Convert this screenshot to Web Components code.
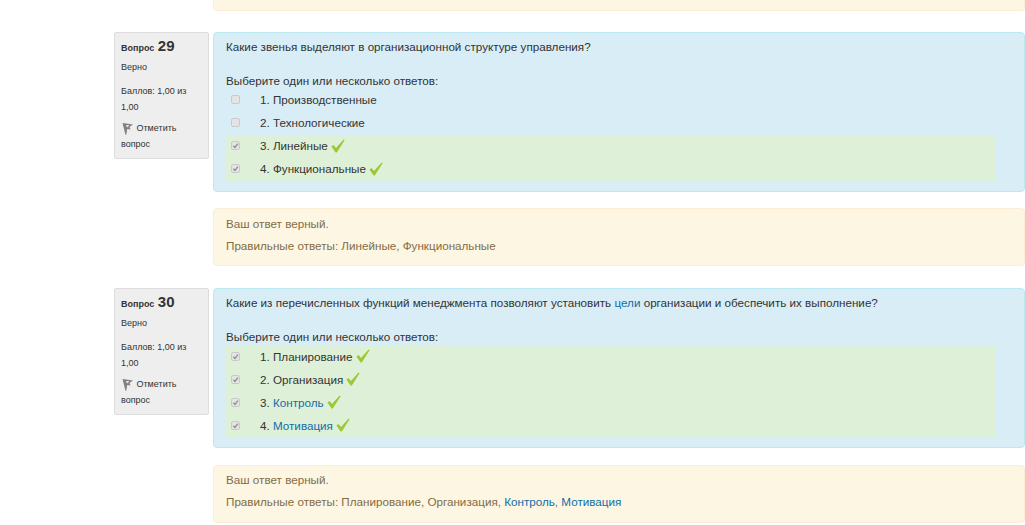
<!DOCTYPE html>
<html lang="ru">
<head>
<meta charset="utf-8">
<title>Тест</title>
<style>
  html, body { margin: 0; padding: 0; background: #fff; overflow: hidden; }
  body { font-family: "Liberation Sans", Arial, sans-serif; font-size: 11.66px; color: #333; height: 525px; }
  a { color: #0e6fa8; text-decoration: none; }
</style>
</head>
<body>
<quiz-page>
  <quiz-feedback slot="top" class="stub"></quiz-feedback>

  <quiz-question number="29" text="Какие звенья выделяют в организационной структуре управления?">
    <quiz-option label="1. Производственные"></quiz-option>
    <quiz-option label="2. Технологические"></quiz-option>
    <quiz-option label="3. Линейные" correct></quiz-option>
    <quiz-option label="4. Функциональные" correct></quiz-option>
    <span slot="feedback">Правильные ответы: Линейные, Функциональные</span>
  </quiz-question>

  <quiz-question number="30">
    <span slot="text">Какие из перечисленных функций менеджмента позволяют установить <a>цели</a> организации и обеспечить их выполнение?</span>
    <quiz-option label="1. Планирование" correct></quiz-option>
    <quiz-option label="2. Организация" correct></quiz-option>
    <quiz-option correct>3. <a>Контроль</a></quiz-option>
    <quiz-option correct>4. <a>Мотивация</a></quiz-option>
    <span slot="feedback">Правильные ответы: Планирование, Организация, <a>Контроль</a>, <a>Мотивация</a></span>
  </quiz-question>
</quiz-page>

<script>
// страница: колонка вопросов, верх уходит за край окна
class QuizPage extends HTMLElement {
    constructor() {
        super();
        this.attachShadow({ mode: 'open' });
    }
    connectedCallback() {
        this.shadowRoot.innerHTML = /*html*/ `
        <style>
            :host{
                display:flex;
                flex-direction:column;
                gap:22px;
                padding-left:114px;
            }
            .top{
                margin-left:99px;
                height:10.2px;
            }
        </style>
        <div class="top"><slot name="top"></slot></div>
        <slot></slot>
        `;
    }
}

class QuizFeedback extends HTMLElement {
    constructor() {
        super();
        this.attachShadow({ mode: 'open' });
    }
    connectedCallback() {
        this.shadowRoot.innerHTML = /*html*/ `
        <style>
            :host{
                display:block;
                box-sizing:border-box;
                background:#fdf6e3;
                border:1px solid #fbeed5;
                border-radius:4px;
                color:#836c45;
                padding:3.8px 12px 8.2px;
                line-height:22px;
            }
            :host(.stub){
                height:11px;
                padding:0;
                border-top:0;
                border-radius:0 0 4px 4px;
            }
        </style>
        <slot></slot>
        `;
    }
}

class QuizOption extends HTMLElement {
    static get observedAttributes() {
        return ['label', 'correct'];
    }
    constructor() {
        super();
        this.attachShadow({ mode: 'open' });
    }
    connectedCallback() {
        this.render();
    }
    attributeChangedCallback() {
        if (this.shadowRoot.innerHTML) this.render();
    }
    render() {
        const correct = this.hasAttribute('correct');
        const label = this.getAttribute('label') || '';
        const box = correct
            ? '<path d="M2.4 4.8 L4 6.5 L6.9 2.6" fill="none" stroke="#8d8d8d" stroke-width="1.3"/>'
            : '';
        const tick = correct
            ? `<svg class="tick" width="14" height="14" viewBox="0 0 14 14"><path d="M0.4 7.4 L2.6 6 L5 9 L12.6 0.5 L13.6 1.2 L5.8 13.6 L4.6 13.6 Z" fill="#9ac935"/></svg>`
            : '';
        this.shadowRoot.innerHTML = /*html*/ `
        <style>
            :host{
                display:flex;
                box-sizing:border-box;
                align-items:center;
                height:23px;
                padding:0 0 2px 5px;
                white-space:nowrap;
            }
            :host([correct]){
                background:#dff0d8;
            }
            .box{
                flex:none;
                width:9px;
                height:9px;
                margin-right:20px;
            }
            .tick{
                margin-left:3px;
            }
        </style>
        <svg class="box" viewBox="0 0 9 9">
            <rect x="0.5" y="0.5" width="8" height="8" rx="1.5" fill="#e4e4e4" stroke="#c9c9c9"/>
            ${box}
        </svg>
        <span>${label}<slot></slot></span>${tick}
        `;
    }
}

class QuizQuestion extends HTMLElement {
    constructor() {
        super();
        this.attachShadow({ mode: 'open' });
    }
    connectedCallback() {
        const number = this.getAttribute('number');
        const text = this.getAttribute('text') || '';
        this.shadowRoot.innerHTML = /*html*/ `
        <style>
            :host{
                display:grid;
                grid-template-columns:95px 812px;
                column-gap:4px;
                row-gap:16.8px;
                align-items:start;
            }
            .info{
                grid-row:1 / 3;
                box-sizing:border-box;
                height:126.4px;
                background:#eee;
                border:1px solid #ddd;
                border-radius:2px;
                padding:4px 6px;
                font-size:9px;
                line-height:16px;
            }
            .info h3{
                margin:0;
                font-size:9px;
                line-height:17px;
                font-weight:bold;
            }
            .info h3 b{ font-size:15px; margin-left:1px; }
            .info p{ margin:0; }
            .state{ padding:2px 0 8px; }
            .info .flag{ margin-top:5px; }
            .flag svg{ vertical-align:-4px; margin-left:1px; }
            .content{
                box-sizing:border-box;
                height:159.4px;
                background:#d9edf7;
                border:1px solid #bce8f1;
                border-radius:4px;
                padding:5px 29px 0 12px;
                line-height:17px;
            }
            .prompt{ margin:0 0 17px; height:17px; }
            .choose{ margin:0; }
            .answers{ display:block; margin-top:0.2px; }
        </style>
        <div class="info">
            <h3>Вопрос <b>${number}</b></h3>
            <p class="state">Верно</p>
            <p>Баллов: 1,00 из 1,00</p>
            <p class="flag"><svg width="12" height="13" viewBox="0 0 12 13"><path d="M0.5 1 L11 2.5 L7.5 5 L8.5 7.5 L5.2 7 L4.4 12.5 L3.4 12.5 Z" fill="#808080"/><path d="M4 3 L7.5 3.3 L5 5.5 Z" fill="#eee"/></svg> Отметить вопрос</p>
        </div>
        <div class="content">
            <p class="prompt">${text}<slot name="text"></slot></p>
            <p class="choose">Выберите один или несколько ответов:</p>
            <div class="answers"><slot></slot></div>
        </div>
        <quiz-feedback style="grid-column:2">
            <div>Ваш ответ верный.</div>
            <div><slot name="feedback"></slot></div>
        </quiz-feedback>
        `;
    }
}

customElements.define('quiz-page', QuizPage);
customElements.define('quiz-feedback', QuizFeedback);
customElements.define('quiz-option', QuizOption);
customElements.define('quiz-question', QuizQuestion);
</script>
</body>
</html>
